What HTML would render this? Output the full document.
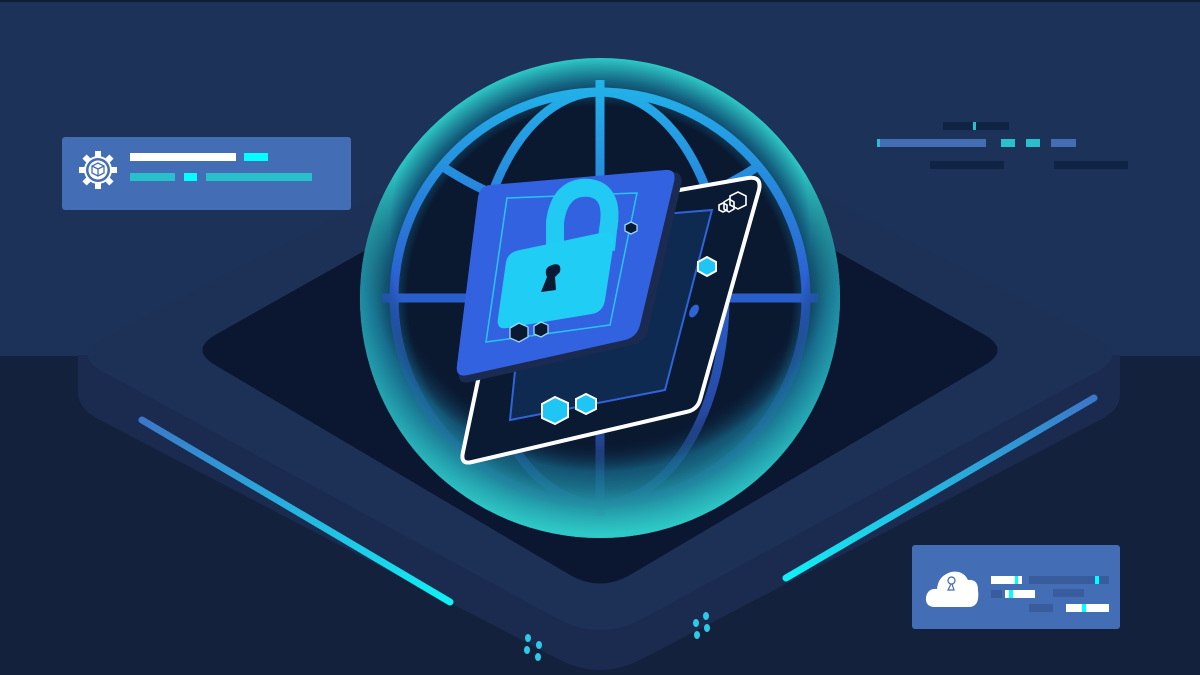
<!DOCTYPE html>
<html><head><meta charset="utf-8"><style>
html,body{margin:0;padding:0;background:#14213d;}
svg{display:block}
</style></head><body>
<svg width="1200" height="675" viewBox="0 0 1200 675" xmlns="http://www.w3.org/2000/svg">
<defs>
<radialGradient id="sph" cx="600" cy="298" r="240" gradientUnits="userSpaceOnUse">
<stop offset="0" stop-color="#0a1830"/>
<stop offset="0.8" stop-color="#0a1830"/>
<stop offset="0.9" stop-color="#146180"/>
<stop offset="1" stop-color="#2ec8c6"/>
</radialGradient>
<radialGradient id="bglow" cx="600" cy="230" r="310" gradientUnits="userSpaceOnUse">
<stop offset="0" stop-color="#0a1830" stop-opacity="0"/>
<stop offset="0.68" stop-color="#0a1830" stop-opacity="0"/>
<stop offset="0.78" stop-color="#176e90" stop-opacity="0.7"/>
<stop offset="0.98" stop-color="#2ec8c6" stop-opacity="1"/>
</radialGradient>
<linearGradient id="globe" x1="0" y1="80" x2="0" y2="520" gradientUnits="userSpaceOnUse">
<stop offset="0" stop-color="#22b4ea"/>
<stop offset="0.45" stop-color="#2b62d2"/>
<stop offset="0.8" stop-color="#26459a"/>
<stop offset="1" stop-color="#1a3166"/>
</linearGradient>
<linearGradient id="glowL" x1="0" y1="0" x2="1" y2="1">
<stop offset="0" stop-color="#3c77c9"/><stop offset="1" stop-color="#11f0f4"/>
</linearGradient>
<linearGradient id="glowR" x1="1" y1="0" x2="0" y2="1">
<stop offset="0" stop-color="#3c77c9"/><stop offset="1" stop-color="#11f0f4"/>
</linearGradient>
<clipPath id="sc"><circle cx="600" cy="298" r="218"/></clipPath>
</defs>
<rect width="1200" height="675" fill="#14213d"/>
<rect width="1200" height="356" fill="#1c3258"/>
<rect width="1200" height="2" fill="#0f1d38"/>
<path d="M78 355 L78 395 Q80 410 100 420 L560 660 Q600 680 640 660 L1100 420 Q1120 410 1120 395 L1120 355 Z" fill="#1a2b4f"/>
<path d="M100 340 L560 100 Q600 80 640 100 L1100 340 Q1125 355 1100 370 L640 620 Q600 640 560 620 L100 370 Q75 355 100 340 Z" fill="#1d3156"/>
<path d="M215 335 L570 135 Q600 118 630 135 L985 335 Q1010 350 985 365 L630 575 Q600 592 570 575 L215 365 Q190 350 215 335 Z" fill="#0b1730"/>
<line x1="142" y1="420" x2="450" y2="602" stroke="url(#glowL)" stroke-width="7" stroke-linecap="round"/>
<line x1="1094" y1="398" x2="786" y2="578" stroke="url(#glowR)" stroke-width="7" stroke-linecap="round"/>
<g fill="#2fc9e8"><ellipse cx="528" cy="638" rx="3" ry="4"/><ellipse cx="539" cy="645" rx="3" ry="4"/><ellipse cx="527" cy="650" rx="3" ry="4"/><ellipse cx="538" cy="657" rx="3" ry="4"/>
<ellipse cx="706" cy="616" rx="3" ry="4"/><ellipse cx="696" cy="623" rx="3" ry="4"/><ellipse cx="707" cy="628" rx="3" ry="4"/><ellipse cx="697" cy="635" rx="3" ry="4"/></g>
<circle cx="600" cy="298" r="240" fill="url(#sph)"/>
<g clip-path="url(#sc)" fill="none" stroke="url(#globe)" stroke-width="9">
<circle cx="600" cy="298" r="206"/>
<line x1="600" y1="80" x2="600" y2="520"/>
<line x1="380" y1="298" x2="820" y2="298"/>
<ellipse cx="600" cy="298" rx="125" ry="206"/>
<path d="M440 165 Q600 270 760 165"/>
</g>
<circle cx="600" cy="298" r="240" fill="url(#bglow)"/>
<path d="M520 218 L748 178 Q762 176 759 190 L700 400 Q697 410 686 412 L472 462 Q460 465 463 452 L510 228 Q512 220 520 218 Z" fill="#0a1a33" stroke="#ffffff" stroke-width="4"/>
<path d="M530 225 L712 210 L665 390 L510 420 Z" fill="#0f2a50" stroke="#2f63d8" stroke-width="2"/>
<path d="M492 190 L670 172 Q684 171 681 185 L648 330 Q645 342 632 345 L470 382 Q457 385 459 372 L480 202 Q482 191 492 190 Z" fill="#1a2a50"/>
<path d="M490 185 L665 170 Q677 169 674 182 L640 325 Q637 337 625 340 L468 375 Q455 378 457 365 L478 197 Q480 186 490 185 Z" fill="#3362e0"/>
<path d="M507 198 L637 193 L610 325 L486 342 Z" fill="none" stroke="#29c5f2" stroke-width="1.5"/>
<path d="M555 250 L555 222 Q560 185 590 188 Q615 192 608 230 L606 250" fill="none" stroke="#22c9f2" stroke-width="18"/>
<path d="M520 250 L605 232 Q616 230 614 242 L605 300 Q603 312 592 314 L507 328 Q496 330 498 318 L506 262 Q508 252 520 250 Z" fill="#1fcdf5"/>
<path d="M552 265 Q562 262 560 272 L555 277 L556 290 L541 292 L547 277 Q543 268 552 265 Z" fill="#0b1a33"/>
<g stroke="#9ad9f5" stroke-width="1.3" fill="#0b1a33"><path d="M510 328 l9 -5 9 4 0 10 -9 5 -9 -4 z"/><path d="M534 326 l7 -4 7 3 0 8 -7 4 -7 -3 z"/><path d="M625 225 l6 -3 6 3 0 6 -6 3 -6 -3 z"/></g>
<g stroke="#ffffff" stroke-width="2" fill="#1fc5f5"><path d="M542 404 l13 -7 13 6 0 14 -13 7 -13 -6 z"/><path d="M576 399 l10 -5 10 5 0 10 -10 5 -10 -5 z"/><path d="M698 262 l9 -5 9 5 0 9 -9 5 -9 -5 z"/></g>
<ellipse cx="694" cy="311" rx="4" ry="7" transform="rotate(30 694 311)" fill="#2f63d8"/>
<g fill="none" stroke="#ffffff" stroke-width="1.6"><path d="M730 196 l8 -4 8 4 0 9 -8 4 -8 -4 z"/><path d="M724 202 l5 -3 5 3 0 7 -5 3 -5 -3 z"/><path d="M719 205 l4 -2 4 2 0 5 -4 2 -4 -2 z"/></g>
<rect x="62" y="137" width="289" height="73" rx="3" fill="#436eb5"/>
<g fill="#ffffff">
<circle cx="98" cy="170" r="14"/>
<rect x="95" y="151" width="6" height="38"/><rect x="79" y="167" width="38" height="6"/>
<rect x="95" y="151" width="6" height="38" transform="rotate(45 98 170)"/><rect x="95" y="151" width="6" height="38" transform="rotate(-45 98 170)"/>
</g>
<circle cx="98" cy="170" r="12" fill="#436eb5"/>
<circle cx="98" cy="170" r="9.5" fill="#ffffff"/>
<path d="M98 163 l6 3 0 7 -6 3 -6 -3 0 -7 z M92 166 l6 3 6 -3 M98 169 l0 7" fill="none" stroke="#436eb5" stroke-width="1.3"/>
<rect x="130" y="153" width="106" height="8" fill="#ffffff"/>
<rect x="244" y="153" width="24" height="8" fill="#00ffff"/>
<rect x="130" y="173" width="45" height="8" fill="#28c1cb"/>
<rect x="184" y="173" width="13" height="8" fill="#00ffff"/>
<rect x="206" y="173" width="106" height="8" fill="#28c1cb"/>
<rect x="943" y="122" width="66" height="8" fill="#0f2444"/>
<rect x="973" y="122" width="3" height="8" fill="#28c1cb"/>
<rect x="877" y="139" width="109" height="8" fill="#436eb5"/>
<rect x="877" y="139" width="3" height="8" fill="#28c1cb"/>
<rect x="1001" y="139" width="14" height="8" fill="#28c1cb"/>
<rect x="1026" y="139" width="14" height="8" fill="#28c1cb"/>
<rect x="1051" y="139" width="25" height="8" fill="#436eb5"/>
<rect x="930" y="161" width="74" height="8" fill="#0f2444"/>
<rect x="1054" y="161" width="74" height="8" fill="#0f2444"/>
<rect x="912" y="545" width="208" height="84" rx="3" fill="#436eb5"/>
<path d="M935 607 Q925 607 926 597 Q928 588 937 589 Q938 576 951 572 Q963 570 968 580 Q978 579 978 590 Q980 606 970 607 Z" fill="#ffffff"/>
<path d="M951 584 a3.5 3.5 0 1 1 1 0 l2 6 -6 0 z" fill="none" stroke="#436eb5" stroke-width="1.2"/>
<rect x="991" y="576" width="31" height="8" fill="#ffffff"/><rect x="1015" y="576" width="3" height="8" fill="#00ffff"/>
<rect x="1029" y="576" width="80" height="8" fill="#385c9c"/><rect x="1095" y="576" width="4" height="8" fill="#00ffff"/>
<rect x="991" y="590" width="11" height="8" fill="#385c9c"/>
<rect x="1005" y="590" width="30" height="8" fill="#ffffff"/><rect x="1009" y="590" width="4" height="8" fill="#00ffff"/>
<rect x="1053" y="589" width="31" height="8" fill="#385c9c"/>
<rect x="1029" y="604" width="24" height="8" fill="#385c9c"/>
<rect x="1066" y="604" width="43" height="8" fill="#ffffff"/><rect x="1082" y="604" width="4" height="8" fill="#00ffff"/>
</svg>
</body></html>
